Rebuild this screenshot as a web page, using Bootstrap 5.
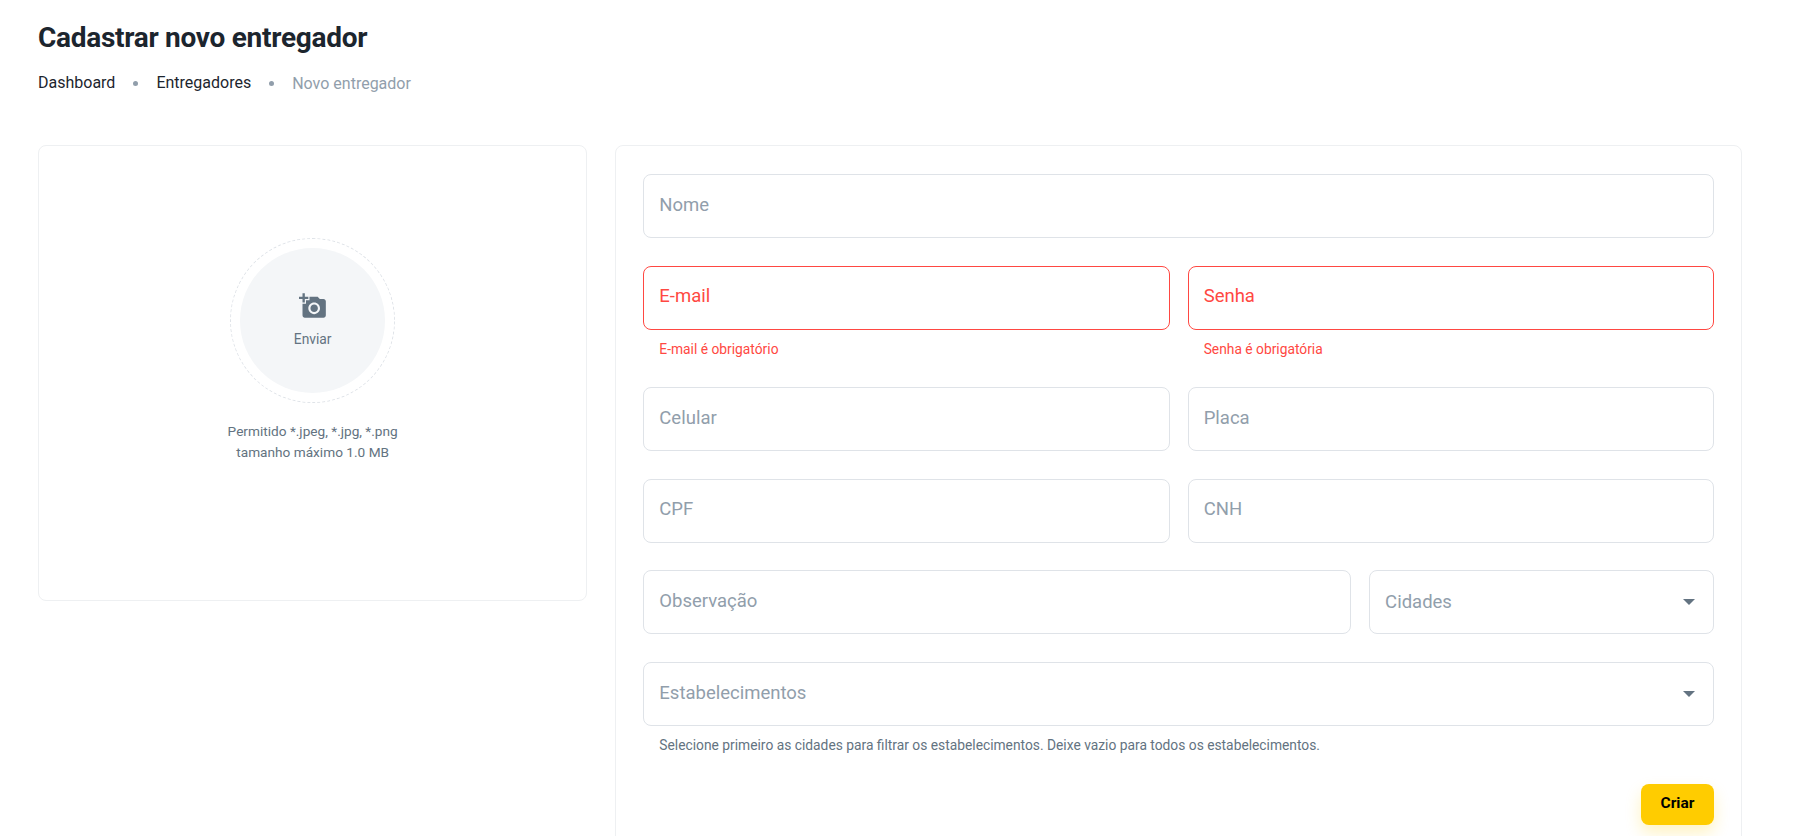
<!DOCTYPE html>
<html lang="pt-BR">
<head>
<meta charset="utf-8">
<title>Cadastrar novo entregador</title>
<link rel="stylesheet" href="https://cdn.jsdelivr.net/npm/bootstrap@5.3.0/dist/css/bootstrap.min.css">
<style>
html, body { height: 836px; overflow: hidden; }
body { font-family: Roboto, "Liberation Sans", sans-serif; color: #1c252e; background: #fff; }
.page-wrap { padding: 21px 68px 0 38px; }
.page-title { font-size: 28px; letter-spacing: -.28px; font-weight: 700; line-height: 34px; margin: 0 0 16px; color: #1c252e; }
.crumbs { font-size: 16px; line-height: 24px; height: 24px; margin-bottom: 50px; gap: 18px; }
.crumbs a { color: #1c252e; text-decoration: none; }
.crumbs .here { color: #919eab; margin-top: 2px; }
.crumb-dot { width: 5px; height: 5px; border-radius: 50%; background: #919eab; }
.main-row { --bs-gutter-x: 28px; --bs-gutter-y: 0; }
.panel { border: 1px solid #eef0f2; border-radius: 8px; background: #fff; }
.upload-panel { padding: 92px 20px 0; height: 456px; }
.drop-ring { width: 165px; height: 165px; padding: 9px; border: 1px dashed #dfe3e8; border-radius: 50%; flex-shrink: 0; }
.drop-disc { width: 100%; height: 100%; border-radius: 50%; background: #f4f6f8; color: #637381; padding-bottom: 2px; }
.drop-disc svg { width: 28px; height: 28px; fill: #637381; }
.drop-disc span { font-size: 13.8px; line-height: 18px; margin-top: 10px; }
.upload-hint { font-size: 13.65px; line-height: 21px; color: #637381; margin-top: 18px; }
.form-panel { padding: 28px 27px; }
.form-row { --bs-gutter-x: 18px; --bs-gutter-y: 0; margin-bottom: 27.6px; }
.field.form-control, .field.form-select {
  height: 64px; border: 1px solid #dfe3e8; border-radius: 8px; padding: 0 15px 3px;
  font-size: 18.5px; color: #1c252e; box-shadow: none;
}
.field.form-control::placeholder { color: #919eab; opacity: 1; }
.field.form-select { color: #919eab; padding-bottom: 0;
  background-image: url("data:image/svg+xml,%3Csvg xmlns='http://www.w3.org/2000/svg' viewBox='0 0 12 6'%3E%3Cpath d='M0 0h12L6 6z' fill='%23637381'/%3E%3C/svg%3E");
  background-size: 12px 6px; background-position: right 18px center;
}
.field.bad { border-color: #ff4842; }
.field.form-control.bad::placeholder { color: #ff4842; }
.help-line { font-size: 13.8px; line-height: 21px; margin: 9px 16px 0; color: #637381; }
.help-line.bad-text { color: #ff4842; }
.save-btn { background: #ffcc00; border: 0; color: #000; font-size: 15.5px; font-weight: 700; height: 41px; width: 73px; border-radius: 8px; padding: 0; box-shadow: 0 8px 16px rgba(255,204,0,.24); }
</style>
</head>
<body>
<div class="page-wrap">
  <h1 class="page-title">Cadastrar novo entregador</h1>
  <nav class="crumbs d-flex align-items-center">
    <a href="#">Dashboard</a><span class="crumb-dot"></span>
    <a href="#">Entregadores</a><span class="crumb-dot"></span>
    <span class="here">Novo entregador</span>
  </nav>
  <div class="row main-row">
    <div class="col-4">
      <div class="panel upload-panel d-flex flex-column align-items-center">
        <div class="drop-ring">
          <div class="drop-disc d-flex flex-column align-items-center justify-content-center">
            <svg viewBox="0 0 24 24"><path d="M3 4V1h2v3h3v2H5v3H3V6H0V4h3zm3 6V7h3V4h7l1.83 2H21c1.1 0 2 .9 2 2v12c0 1.1-.9 2-2 2H5c-1.1 0-2-.9-2-2V10h3zm7 9c2.76 0 5-2.24 5-5s-2.24-5-5-5-5 2.24-5 5 2.24 5 5 5zm-3.2-5c0 1.77 1.43 3.2 3.2 3.2s3.2-1.43 3.2-3.2-1.43-3.2-3.2-3.2-3.2 1.43-3.2 3.2z"/></svg>
            <span>Enviar</span>
          </div>
        </div>
        <div class="upload-hint text-center">Permitido *.jpeg, *.jpg, *.png<br>tamanho máximo 1.0 MB</div>
      </div>
    </div>
    <div class="col-8">
      <form class="panel form-panel">
        <div class="row form-row"><div class="col-12"><input class="form-control field" placeholder="Nome"></div></div>
        <div class="row form-row">
          <div class="col-6"><input class="form-control field bad" placeholder="E-mail"><div class="help-line bad-text">E-mail é obrigatório</div></div>
          <div class="col-6"><input class="form-control field bad" placeholder="Senha"><div class="help-line bad-text">Senha é obrigatória</div></div>
        </div>
        <div class="row form-row">
          <div class="col-6"><input class="form-control field" placeholder="Celular"></div>
          <div class="col-6"><input class="form-control field" placeholder="Placa"></div>
        </div>
        <div class="row form-row">
          <div class="col-6"><input class="form-control field" placeholder="CPF"></div>
          <div class="col-6"><input class="form-control field" placeholder="CNH"></div>
        </div>
        <div class="row form-row">
          <div class="col-8"><input class="form-control field" placeholder="Observação"></div>
          <div class="col-4"><select class="form-select field"><option>Cidades</option></select></div>
        </div>
        <div class="row form-row">
          <div class="col-12"><select class="form-select field"><option>Estabelecimentos</option></select>
          <div class="help-line">Selecione primeiro as cidades para filtrar os estabelecimentos. Deixe vazio para todos os estabelecimentos.</div></div>
        </div>
        <div class="d-flex justify-content-end"><button type="button" class="btn save-btn">Criar</button></div>
      </form>
    </div>
  </div>
</div>
<script src="https://cdn.jsdelivr.net/npm/bootstrap@5.3.0/dist/js/bootstrap.bundle.min.js"></script>
</body>
</html>
